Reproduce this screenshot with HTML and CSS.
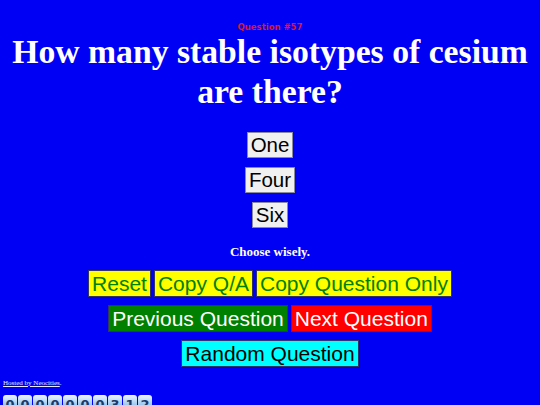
FILE: index.html
```html
<!DOCTYPE html>
<html>
<head>
<meta charset="utf-8">
<link rel="stylesheet" href="styles.css">
</head>
<body>
<main class="page">
  <div class="qnum">Question #57</div>
  <h1 class="question">How many stable isotypes of cesium are there?</h1>
  <div class="answers">
    <span class="answer">One</span>
    <span class="answer">Four</span>
    <span class="answer">Six</span>
  </div>
  <p class="hint">Choose wisely.</p>
  <div class="btn-row">
    <button class="btn btn-yellow">Reset</button>
    <button class="btn btn-yellow">Copy Q/A</button>
    <button class="btn btn-yellow">Copy Question Only</button>
  </div>
  <div class="btn-row">
    <button class="btn btn-green">Previous Question</button>
    <button class="btn btn-red">Next Question</button>
  </div>
  <div class="btn-row">
    <button class="btn btn-cyan">Random Question</button>
  </div>
</main>
<footer class="footer">
  <a class="host" href="#">Hosted by Neocities</a><span class="host-dot">.</span>
  <div class="counter">
    <span class="digit">0</span><span class="digit">0</span><span class="digit">0</span><span class="digit">0</span><span class="digit">0</span><span class="digit">0</span><span class="digit">0</span><span class="digit">3</span><span class="digit">1</span><span class="digit">2</span>
  </div>
</footer>
</body>
</html>
```
FILE: styles.css
```css
html, body {
  margin: 0;
  padding: 0;
}
body {
  background: #0000f5;
  width: 540px;
  height: 405px;
  overflow: hidden;
}
.page {
  display: flex;
  flex-direction: column;
  align-items: center;
  text-align: center;
  padding-top: 22px;
}
.qnum {
  font-family: "DejaVu Sans", sans-serif;
  font-weight: bold;
  font-size: 8.5px;
  color: #d8183c;
  line-height: 10px;
}
.question {
  font-family: "Liberation Serif", serif;
  font-weight: bold;
  font-size: 33.7px;
  line-height: 40px;
  color: #ffffff;
  margin: 0;
}
.answers {
  display: flex;
  flex-direction: column;
  align-items: center;
  gap: 9px;
  margin-top: 20px;
}
.answer {
  font-family: "Liberation Sans", sans-serif;
  font-size: 20.5px;
  line-height: 24px;
  color: #000;
  background: #f0f0f0;
  border: 1px solid #8a8a9a;
  padding: 0 3px;
}
.hint {
  font-family: "Liberation Serif", serif;
  font-weight: bold;
  font-size: 13px;
  color: #ffffff;
  margin: 16px 0 10px 0;
  line-height: 16px;
}
.btn-row {
  display: flex;
  justify-content: center;
  gap: 3px;
  margin-bottom: 8px;
}
.btn {
  font-family: "Liberation Sans", sans-serif;
  font-size: 21px;
  line-height: 25px;
  padding: 0 3px;
  border: 1px solid #333366;
  margin: 0;
  border-radius: 0;
}
.btn-yellow {
  background: #ffff00;
  color: #008000;
}
.btn-green {
  background: #008000;
  color: #ffffff;
}
.btn-red {
  background: #ff0000;
  color: #ffffff;
}
.btn-cyan {
  background: #00ffff;
  color: #000000;
}
.footer {
  padding: 4px 0 0 3px;
  font-family: "Liberation Serif", serif;
  font-size: 7px;
  color: #e8e8ff;
}
.host {
  color: #e8e8ff;
  text-decoration: underline;
}
.counter {
  display: flex;
  gap: 1px;
  margin-top: 8px;
}
.digit {
  width: 14px;
  height: 18px;
  border-radius: 3px;
  background: linear-gradient(#eef6ff, #5aa2e6);
  color: #1a3a6a;
  font-family: "DejaVu Sans", sans-serif;
  font-weight: bold;
  font-size: 13px;
  line-height: 20px;
  text-align: center;
}
```
